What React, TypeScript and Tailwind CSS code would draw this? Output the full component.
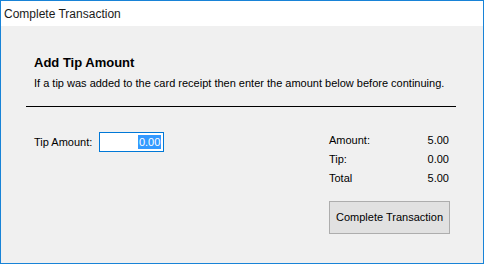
import React from 'react';

const App = () => {
  const summary = [
    { label: 'Amount:', value: '5.00' },
    { label: 'Tip:', value: '0.00' },
    { label: 'Total', value: '5.00' },
  ];

  return (
    <div className="w-[484px] h-[264px] bg-white font-['Liberation_Sans',sans-serif] text-[11px] text-black">
      <div className="flex flex-col h-full border border-[#1883d7]">
        {/* title bar */}
        <div className="h-[25px] bg-white flex items-center pl-[3px] text-[12px] text-[#1a1a1a]">
          Complete Transaction
        </div>

        <div className="flex-1 bg-[#f0f0f0] px-[25px] pt-[29px]">
          <div className="px-[8px]">
            <h2 className="text-[13px] font-bold leading-[16px]">Add Tip Amount</h2>
            <p className="mt-[5px] leading-[14px]">
              If a tip was added to the card receipt then enter the amount below before continuing.
            </p>
          </div>
          <div className="mt-[16px] h-px w-[430px] bg-black" />

          <div className="flex justify-between mt-[24px] pl-[8px] pr-[8px]">
            <div className="flex items-center gap-[7px] h-[20px] mt-px">
              <span>Tip Amount:</span>
              <div className="w-[65px] h-[20px] border border-[#0078d7] bg-white flex items-center justify-end pr-[2px]">
                <span className="bg-[#3399ff] text-white leading-[14px] px-px">0.00</span>
              </div>
            </div>

            <div className="w-[121px] flex flex-col">
              <div className="flex flex-col gap-[5px] pt-[2px] pr-[1px]">
                {summary.map((row) => (
                  <div key={row.label} className="flex justify-between leading-[14px]">
                    <span>{row.label}</span>
                    <span>{row.value}</span>
                  </div>
                ))}
              </div>
              <button className="mt-[16px] h-[33px] w-[121px] bg-[#e1e1e1] border border-[#adadad] text-[11px]">
                Complete Transaction
              </button>
            </div>
          </div>
        </div>
      </div>
    </div>
  );
};

export default App;
